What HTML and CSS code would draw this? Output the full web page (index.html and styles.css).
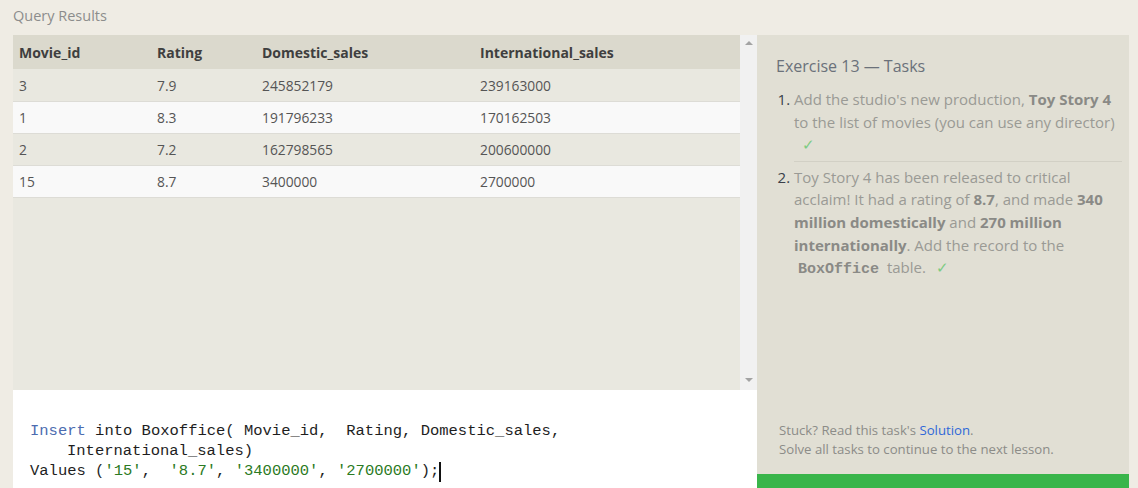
FILE: index.html
```html
<!DOCTYPE html>
<html>
<head>
<meta charset="utf-8">
<link rel="stylesheet" href="styles.css">
</head>
<body>
<div class="title">Query Results</div>
<div class="main">
  <div class="left">
    <div class="results">
      <div class="table-wrap">
        <table class="grid">
          <thead>
            <tr><th class="c1">Movie_id</th><th class="c2">Rating</th><th class="c3">Domestic_sales</th><th>International_sales</th></tr>
          </thead>
          <tbody>
            <tr class="odd"><td>3</td><td>7.9</td><td>245852179</td><td>239163000</td></tr>
            <tr class="even"><td>1</td><td>8.3</td><td>191796233</td><td>170162503</td></tr>
            <tr class="odd"><td>2</td><td>7.2</td><td>162798565</td><td>200600000</td></tr>
            <tr class="even"><td>15</td><td>8.7</td><td>3400000</td><td>2700000</td></tr>
          </tbody>
        </table>
      </div>
      <div class="scrollbar">
        <span class="arrow up"></span>
        <span class="arrow down"></span>
      </div>
    </div>
    <div class="editor">
      <div class="code-line"><span class="kw">Insert</span> into Boxoffice( Movie_id,  Rating, Domestic_sales,</div>
      <div class="code-line indent">International_sales)</div>
      <div class="code-line">Values (<span class="str">'15'</span>,  <span class="str">'8.7'</span>, <span class="str">'3400000'</span>, <span class="str">'2700000'</span>);<span class="caret"></span></div>
    </div>
  </div>
  <div class="right">
    <div class="tasks">
      <h2 class="tasks-title">Exercise 13 — Tasks</h2>
      <ol class="task-list">
        <li class="task">Add the studio's new production, <b>Toy Story 4</b> to the list of movies (you can use any director)<br><span class="check first">✓</span></li>
        <li class="task">Toy Story 4 has been released to critical acclaim! It had a rating of <b>8.7</b>, and made <b>340 million domestically</b> and <b>270 million internationally</b>. Add the record to the <code class="tbl">BoxOffice</code> table. <span class="check">✓</span></li>
      </ol>
    </div>
    <div class="help">
      <div>Stuck? Read this task's <span class="link">Solution</span>.</div>
      <div>Solve all tasks to continue to the next lesson.</div>
    </div>
    <div class="continue"></div>
  </div>
</div>
</body>
</html>
```
FILE: styles.css
```css
html, body {
  margin: 0;
  padding: 0;
}
body {
  background: #efece4;
  font-family: "Open Sans", "Noto Sans", sans-serif;
  width: 1138px;
  height: 488px;
  overflow: hidden;
}
.title {
  height: 35px;
  line-height: 32px;
  padding-left: 13px;
  font-size: 14.5px;
  color: #8c8c8c;
}
.main {
  display: flex;
  margin-left: 13px;
  width: 1116px;
  height: 453px;
}
.left {
  width: 744px;
  display: flex;
  flex-direction: column;
}
.results {
  height: 355px;
  flex: none;
  display: flex;
  background: #e9e8e0;
}
.table-wrap {
  flex: 1;
}
.grid {
  border-collapse: collapse;
  width: 100%;
  font-size: 13.8px;
  color: #555;
}
.grid th {
  background: #dbd9cd;
  height: 34px;
  padding: 0 0 0 6px;
  text-align: left;
  font-weight: 700;
  font-size: 14px;
  color: #3f3f3f;
}
.grid .c1 { width: 132px; }
.grid .c2 { width: 99px; }
.grid .c3 { width: 212px; }
.grid td {
  height: 31px;
  padding: 0 0 0 6px;
  border-top: 1px solid #dddcd6;
}
.grid tbody tr:first-child td { border-top: none; height: 32px; }
.grid .odd td { background: #e9e8e0; }
.grid .even td { background: #f9f9f9; }
.grid tbody tr:last-child td { border-bottom: 1px solid #dddcd6; }
.scrollbar {
  width: 17px;
  background: #f1f1f1;
  display: flex;
  flex-direction: column;
  justify-content: space-between;
  align-items: center;
  padding: 6px 0 6px;
  box-sizing: border-box;
}
.arrow {
  width: 0;
  height: 0;
  border-left: 4px solid transparent;
  border-right: 4px solid transparent;
}
.arrow.up { border-bottom: 4px solid #a3a3a3; }
.arrow.down { border-top: 4px solid #a3a3a3; margin-bottom: 2px; }
.editor {
  flex: none;
  height: 98px;
  box-sizing: border-box;
  background: #ffffff;
  padding: 31px 0 0 17px;
  font-family: "Liberation Mono", "DejaVu Sans Mono", monospace;
  font-size: 15.5px;
  line-height: 20px;
  color: #1e1e1e;
}
.code-line {
  white-space: pre;
  height: 20px;
}
.code-line.indent { padding-left: 37px; }
.kw { color: #4c6cb0; }
.str { color: #2b7a23; }
.caret {
  display: inline-block;
  width: 2px;
  height: 20px;
  background: #111;
  vertical-align: top;
  margin-top: 1px;
}
.right {
  width: 372px;
  background: #e1dfd4;
  display: flex;
  flex-direction: column;
}
.tasks {
  flex: 1;
  padding: 21px 7px 0 19px;
}
.tasks-title {
  margin: 0 0 12px;
  font-size: 16px;
  font-weight: 400;
  color: #6b717a;
  line-height: 20px;
}
.task-list {
  margin: 0;
  padding: 0 0 0 18px;
  font-size: 15px;
  line-height: 22.6px;
  color: #9a9a95;
}
.task {
  padding: 0 0 5px;
}
.task::marker {
  color: #3a3f4a;
}
.task:first-child {
  border-bottom: 1px solid #d2d0c5;
  margin-bottom: 4px;
}
.task b {
  color: #8a8a86;
  font-weight: 700;
}
.check {
  color: #7ccb82;
  padding-left: 6px;
}
.check.first { padding-left: 8px; }
.tbl {
  font-family: "Liberation Mono", "DejaVu Sans Mono", monospace;
  font-weight: 700;
  font-size: 15px;
  color: #8a8a86;
  padding: 0 4px;
}
.help {
  padding: 0 0 15px 22px;
  font-size: 13.2px;
  line-height: 19px;
  color: #8c8c88;
}
.link { color: #2f68d8; }
.continue {
  height: 14px;
  background: #39b54a;
}
```
